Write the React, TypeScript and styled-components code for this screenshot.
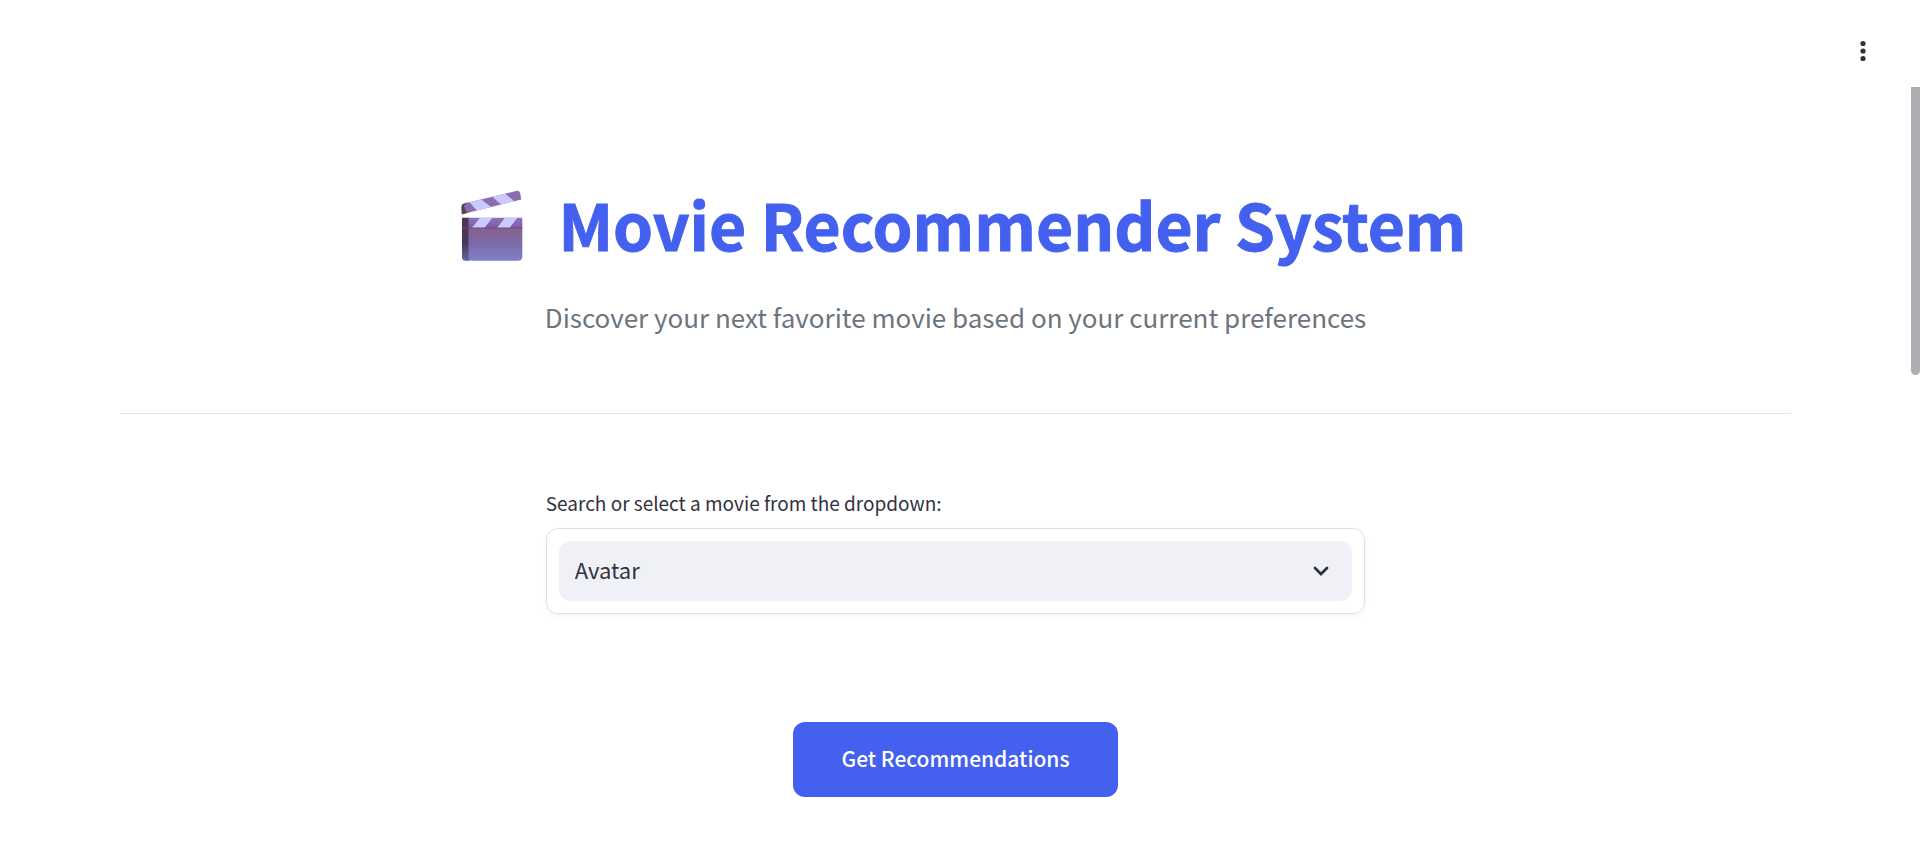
import React, { useState } from "react";
import styled, { createGlobalStyle } from "styled-components";

const GlobalStyle = createGlobalStyle`
  *, *::before, *::after { box-sizing: border-box; }
  body {
    margin: 0;
    background: #ffffff;
    color: #31333f;
    font-family: "Source Sans Pro", "Noto Sans CJK SC", "Noto Sans", sans-serif;
  }
`;

const Page = styled.div`
  display: flex;
  flex-direction: column;
  min-height: 100vh;
`;

const TopBar = styled.header`
  display: flex;
  justify-content: flex-end;
  padding: 33px 39px 18px;
`;

const MenuButton = styled.button`
  display: grid;
  place-items: center;
  width: 36px;
  height: 36px;
  padding: 0;
  border: 0;
  border-radius: 8px;
  background: transparent;
  color: #31333f;
  cursor: pointer;
`;

const Body = styled.div`
  display: flex;
  flex: 1;
`;

const Main = styled.main`
  flex: 1;
  padding: 96px 120px 56px;
`;

const ScrollTrack = styled.div`
  width: 9px;
`;

const ScrollThumb = styled.div`
  height: 288px;
  border-radius: 0 0 5px 5px;
  background: #adadb2;
`;

const Title = styled.h1`
  display: flex;
  justify-content: center;
  gap: 16px;
  margin: 0;
  color: #4361ee;
  font-size: 64px;
  font-weight: 700;
  line-height: 80px;
  -webkit-text-stroke: 1px #4361ee;
`;

const Subtitle = styled.p`
  margin: 34px 0 0;
  color: #6c757d;
  font-size: 26px;
  line-height: 40px;
  text-align: center;
`;

const Divider = styled.hr`
  height: 1px;
  margin: 76px 0 73px;
  border: 0;
  background: #e3e3e6;
`;

const Columns = styled.form`
  display: grid;
  grid-template-columns: 1fr 2fr 1fr;
  column-gap: 16px;
`;

const Field = styled.div`
  grid-column: 2;
`;

const Label = styled.label`
  display: block;
  margin-bottom: 9px;
  font-size: 19px;
  line-height: 32px;
`;

const SelectFrame = styled.div`
  padding: 12px;
  border: 1px solid #e0e0e2;
  border-radius: 12px;
  box-shadow: 0 2px 5px rgba(0, 0, 0, 0.05);
`;

const SelectBox = styled.div`
  display: grid;
  align-items: center;
  border-radius: 12px;
  background: #f0f1f6;

  > * { grid-area: 1 / 1; }
  > svg { justify-self: end; margin-right: 18px; pointer-events: none; }
`;

const Select = styled.select`
  width: 100%;
  height: 60px;
  padding: 0 56px 4px 16px;
  border: 0;
  border-radius: 12px;
  background: transparent;
  color: #31333f;
  font-family: inherit;
  font-size: 22px;
  appearance: none;
`;

const Submit = styled.button`
  grid-column: 2;
  justify-self: center;
  height: 75px;
  margin-top: 108px;
  padding: 0 48px 4px;
  border: 0;
  border-radius: 12px;
  background: #4361ee;
  color: #ffffff;
  font-family: inherit;
  font-size: 21px;
  font-weight: 500;
  cursor: pointer;
`;

const Clapper = () => (
  <svg width="98" height="80" viewBox="444 183 98 80" aria-hidden="true">
    <defs>
      <linearGradient id="slate" x1="0" y1="0" x2="0" y2="1">
        <stop offset="0" stopColor="#85608c" />
        <stop offset="0.5" stopColor="#7c6ca9" />
        <stop offset="1" stopColor="#7f80ca" />
      </linearGradient>
      <linearGradient id="side" x1="0" y1="0" x2="0" y2="1">
        <stop offset="0" stopColor="#4a3650" />
        <stop offset="0.6" stopColor="#493859" />
        <stop offset="1" stopColor="#6563a8" />
      </linearGradient>
      <linearGradient id="bar" x1="0" y1="0" x2="0" y2="1">
        <stop offset="0" stopColor="#8d73b9" />
        <stop offset="1" stopColor="#8058ac" />
      </linearGradient>
      <clipPath id="arm">
        <path d="M466 203 L516 191 Q519.500 190 520.300 194 L521.300 199.500 L467 213 L464 206 Z" />
      </clipPath>
    </defs>
    <path d="M461.300 208 Q461.300 204 464.500 203.300 L467.500 202.600 Q465.500 207 468.500 212.700 L461.800 214.600 Z" fill="#594058" />
    <g clipPath="url(#arm)">
      <path d="M460 186h64v32h-64z" fill="#876fae" />
      <path d="M468.500 201 L480 198.500 L491.500 207.300 L477.500 211.500 Z" fill="#ccc9fd" />
      <path d="M492 196.500 L504.500 193 L514.500 201.500 L501.500 205 Z" fill="#ccc9fd" />
    </g>
    <path d="M462 217.700h8v43h-4.500q-3.500 0-3.500-4z" fill="url(#side)" />
    <path d="M468.500 227.700h53.800v28.500q0 4.500-4.500 4.500h-45q-4.300 0-4.300-4.500z" fill="url(#slate)" />
    <path d="M468.500 217.700h53.800v10.300h-53.800z" fill="url(#bar)" />
    <path d="M480 217.700h12.500l-8.200 10.300h-12.500z" fill="#ccc9fd" />
    <path d="M505 217.700h12.500l-8 10.300H497z" fill="#ccc9fd" />
    <path d="M462 227.500h60.300v1H462z" fill="#6f4d78" />
  </svg>
);

const MoreIcon = () => (
  <svg width="24" height="24" viewBox="0 0 24 24" fill="currentColor" aria-hidden="true">
    <circle cx="12" cy="4.500" r="2.600" />
    <circle cx="12" cy="12" r="2.600" />
    <circle cx="12" cy="19.500" r="2.600" />
  </svg>
);

const ChevronIcon = () => (
  <svg width="26" height="26" viewBox="0 0 26 26" fill="none" stroke="#31333f" strokeWidth="2.800" strokeLinecap="round" aria-hidden="true">
    <path d="M7 10 L13 16 L19 10" />
  </svg>
);

const movies = ["Avatar", "Spectre", "The Dark Knight Rises", "John Carter"];

export default function App() {
  const [movie, setMovie] = useState(movies[0]);

  return (
    <>
      <GlobalStyle />
      <Page>
        <TopBar>
          <MenuButton type="button" aria-label="Main menu">
            <MoreIcon />
          </MenuButton>
        </TopBar>
        <Body>
          <Main>
            <Title>
              <Clapper />
              Movie Recommender System
            </Title>
            <Subtitle>Discover your next favorite movie based on your current preferences</Subtitle>
            <Divider />
            <Columns onSubmit={(event) => event.preventDefault()}>
              <Field>
                <Label htmlFor="movie">Search or select a movie from the dropdown:</Label>
                <SelectFrame>
                  <SelectBox>
                    <Select id="movie" value={movie} onChange={(event) => setMovie(event.target.value)}>
                      {movies.map((name) => (
                        <option key={name}>{name}</option>
                      ))}
                    </Select>
                    <ChevronIcon />
                  </SelectBox>
                </SelectFrame>
              </Field>
              <Submit type="submit">Get Recommendations</Submit>
            </Columns>
          </Main>
          <ScrollTrack>
            <ScrollThumb />
          </ScrollTrack>
        </Body>
      </Page>
    </>
  );
}
